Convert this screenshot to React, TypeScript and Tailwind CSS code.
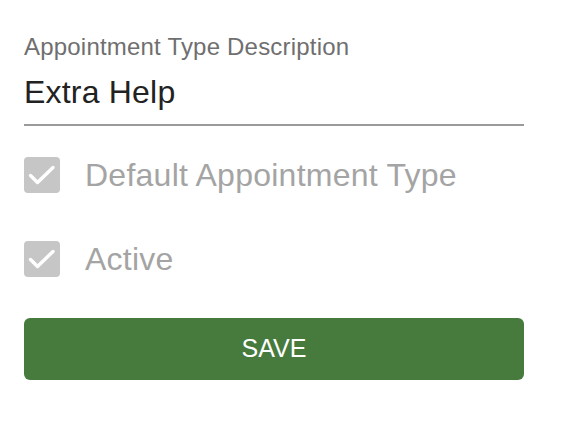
import React from "react";

const Check = () => (
  <span className="flex h-9 w-9 shrink-0 items-center justify-center rounded-[4px] bg-[#c6c6c6]">
    <svg width="36" height="36" viewBox="0 0 36 36" fill="none">
      <path
        d="M6.5 18.5 L13.5 25.5 L29 10.5"
        stroke="#ffffff"
        strokeWidth="3.4"
        strokeLinecap="round"
        strokeLinejoin="round"
      />
    </svg>
  </span>
);

const CheckRow = ({ label }: { label: string }) => (
  <label className="flex h-9 items-center gap-[25px]">
    <Check />
    <span className="text-[32px] leading-9 tracking-[0.25px] text-[#a4a4a4]">{label}</span>
  </label>
);

const App = () => {
  return (
    <div className="min-h-[422px] w-[568px] bg-white px-6 pt-[35px] font-['Liberation_Sans',Arial,sans-serif]">
      <div className="w-[500px]">
        <div className="text-[24px] leading-6 tracking-[0.2px] text-[#6f6f6f]">
          Appointment Type Description
        </div>
        <div className="mt-[17px] border-b-2 border-[#9a9a9a] pb-4 text-[32px] leading-8 tracking-[0.2px] text-[#222222]">
          Extra Help
        </div>
        <div className="mt-[31px] flex flex-col gap-12">
          <CheckRow label="Default Appointment Type" />
          <CheckRow label="Active" />
        </div>
        <button className="mt-[41px] flex h-[62px] w-full items-center justify-center rounded-[6px] bg-[#467b3d] text-[25px] text-white">
          SAVE
        </button>
      </div>
    </div>
  );
};

export default App;
